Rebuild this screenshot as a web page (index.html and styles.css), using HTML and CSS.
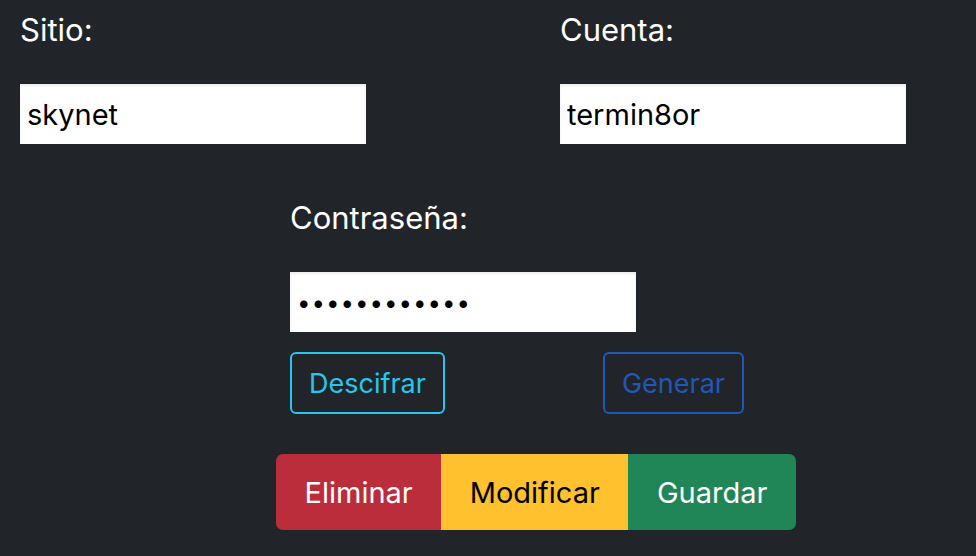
FILE: index.html
```html
<!DOCTYPE html>
<html lang="es">
<head>
<meta charset="utf-8">
<title>Contraseñas</title>
<link rel="stylesheet" href="styles.css">
</head>
<body>
<main class="page">
  <div class="top">
    <div class="field">
      <label class="lbl" for="sitio">Sitio:</label>
      <input class="inp" id="sitio" type="text" value="skynet">
    </div>
    <div class="field">
      <label class="lbl" for="cuenta">Cuenta:</label>
      <input class="inp" id="cuenta" type="text" value="termin8or">
    </div>
  </div>
  <div class="pass">
    <div class="field">
      <label class="lbl" for="pw">Contraseña:</label>
      <input class="inp" id="pw" type="password" value="abcdefghijkl">
    </div>
    <div class="actions">
      <button class="btn-o btn-info">Descifrar</button>
      <button class="btn-o btn-primary">Generar</button>
    </div>
  </div>
  <div class="group">
    <button class="gbtn g-danger">Eliminar</button>
    <button class="gbtn g-warning">Modificar</button>
    <button class="gbtn g-success">Guardar</button>
  </div>
</main>
</body>
</html>
```
FILE: styles.css
```css
html, body {
  margin: 0;
  padding: 0;
  background: #212529;
}
body {
  font-family: Inter, "Noto Sans", sans-serif;
  color: #fff;
}
.page {
  padding-top: 10px;
}
.top {
  display: grid;
  grid-template-columns: 540px 1fr;
  padding-left: 20px;
}
.field {
  display: flex;
  flex-direction: column;
  align-items: flex-start;
}
.lbl {
  font-size: 31px;
  line-height: 40px;
  height: 40px;
  margin-bottom: 34px;
}
.inp {
  box-sizing: border-box;
  width: 346px;
  height: 60px;
  border: 0;
  border-radius: 0;
  margin: 0;
  padding: 0 7px;
  background: #fff;
  color: #000;
  font-family: Inter, "Noto Sans", sans-serif;
  font-size: 29px;
  box-shadow: inset 0 2px 3px rgba(0,0,0,0.08);
  outline: none;
}
.inp[type="password"] {
  font-size: 24px;
  letter-spacing: 1px;
}
.pass {
  margin-left: 290px;
  margin-top: 54px;
  width: 454px;
}
.actions {
  display: flex;
  justify-content: space-between;
  margin-top: 20px;
}
.btn-o {
  box-sizing: border-box;
  height: 62px;
  padding: 0 17px;
  background: transparent;
  border: 2px solid;
  border-radius: 6px;
  font-family: Inter, "Noto Sans", sans-serif;
  font-size: 27px;
}
.btn-info {
  color: #25c8ea;
  border-color: #25c8ea;
}
.btn-primary {
  color: #2058b8;
  border-color: #2058b8;
}
.group {
  display: inline-flex;
  margin-left: 276px;
  margin-top: 40px;
  border-radius: 7px;
  overflow: hidden;
}
.gbtn {
  height: 76px;
  padding: 0 28.5px;
  border: 0;
  font-family: Inter, "Noto Sans", sans-serif;
  font-size: 29px;
}
.g-danger { background: #bb2d3b; color: #fff; }
.g-warning { background: #ffc12e; color: #000; }
.g-success { background: #218657; color: #fff; }
```
